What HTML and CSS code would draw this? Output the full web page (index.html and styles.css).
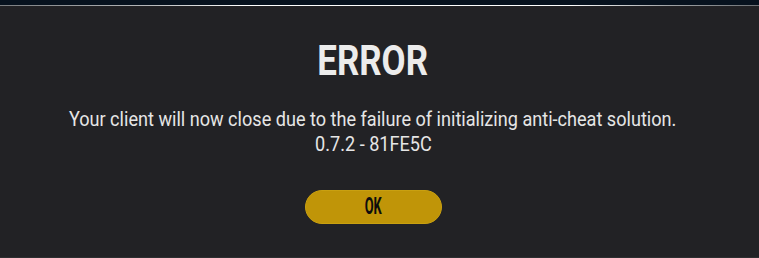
FILE: index.html
```html
<!DOCTYPE html>
<html>
<head>
<meta charset="utf-8">
<link rel="stylesheet" href="styles.css">
</head>
<body>
<div class="backdrop"></div>
<div class="edge"></div>
<main class="panel">
  <h1 class="title"><span class="squeeze-title">ERROR</span></h1>
  <p class="message"><span class="squeeze">Your client will now close due to the failure of initializing anti-cheat solution.</span><br><span class="squeeze">0.7.2 - 81FE5C</span></p>
  <button class="ok"><span class="squeeze-ok">OK</span></button>
</main>
</body>
</html>
```

FILE: styles.css
```css
html, body {
  margin: 0;
  padding: 0;
  height: 100%;
}
body {
  background: #07111d;
  font-family: Roboto, "Noto Sans", sans-serif;
  display: flex;
  flex-direction: column;
  overflow: hidden;
}
.backdrop {
  height: 5px;
  background: #07121e;
}
.edge {
  height: 1px;
  background: linear-gradient(90deg, #7a7d80 0%, #b8babc 20%, #ffffff 32%, #ffffff 75%, #a0a3a6 88%, #6d7175 100%);
}
.panel {
  flex: 1;
  background: #222225;
  border-bottom: 1px solid #2e2f31;
  display: flex;
  flex-direction: column;
  align-items: center;
  padding-right: 13px;
}
.title {
  margin: 30px 0 0;
  font-size: 42px;
  font-weight: 700;
  line-height: 50px;
  color: #ececec;
}
.squeeze-title {
  display: inline-block;
  transform: scaleX(0.83);
}
.squeeze {
  display: inline-block;
  transform: scaleX(0.905);
}
.message {
  margin: 21px 0 0;
  font-size: 20px;
  line-height: 25px;
  color: #e6e6e6;
  text-align: center;
  white-space: nowrap;
}
.ok {
  margin-top: 33px;
  width: 137px;
  height: 34px;
  border-radius: 17px;
  background: #c09508;
  border: 1px solid #c9a010;
  color: #0d0d0d;
  font-family: Roboto, sans-serif;
  font-weight: 700;
  font-size: 23px;
  line-height: 32px;
  padding: 0;
}
.squeeze-ok {
  display: inline-block;
  transform: scaleX(0.56);
}
```
